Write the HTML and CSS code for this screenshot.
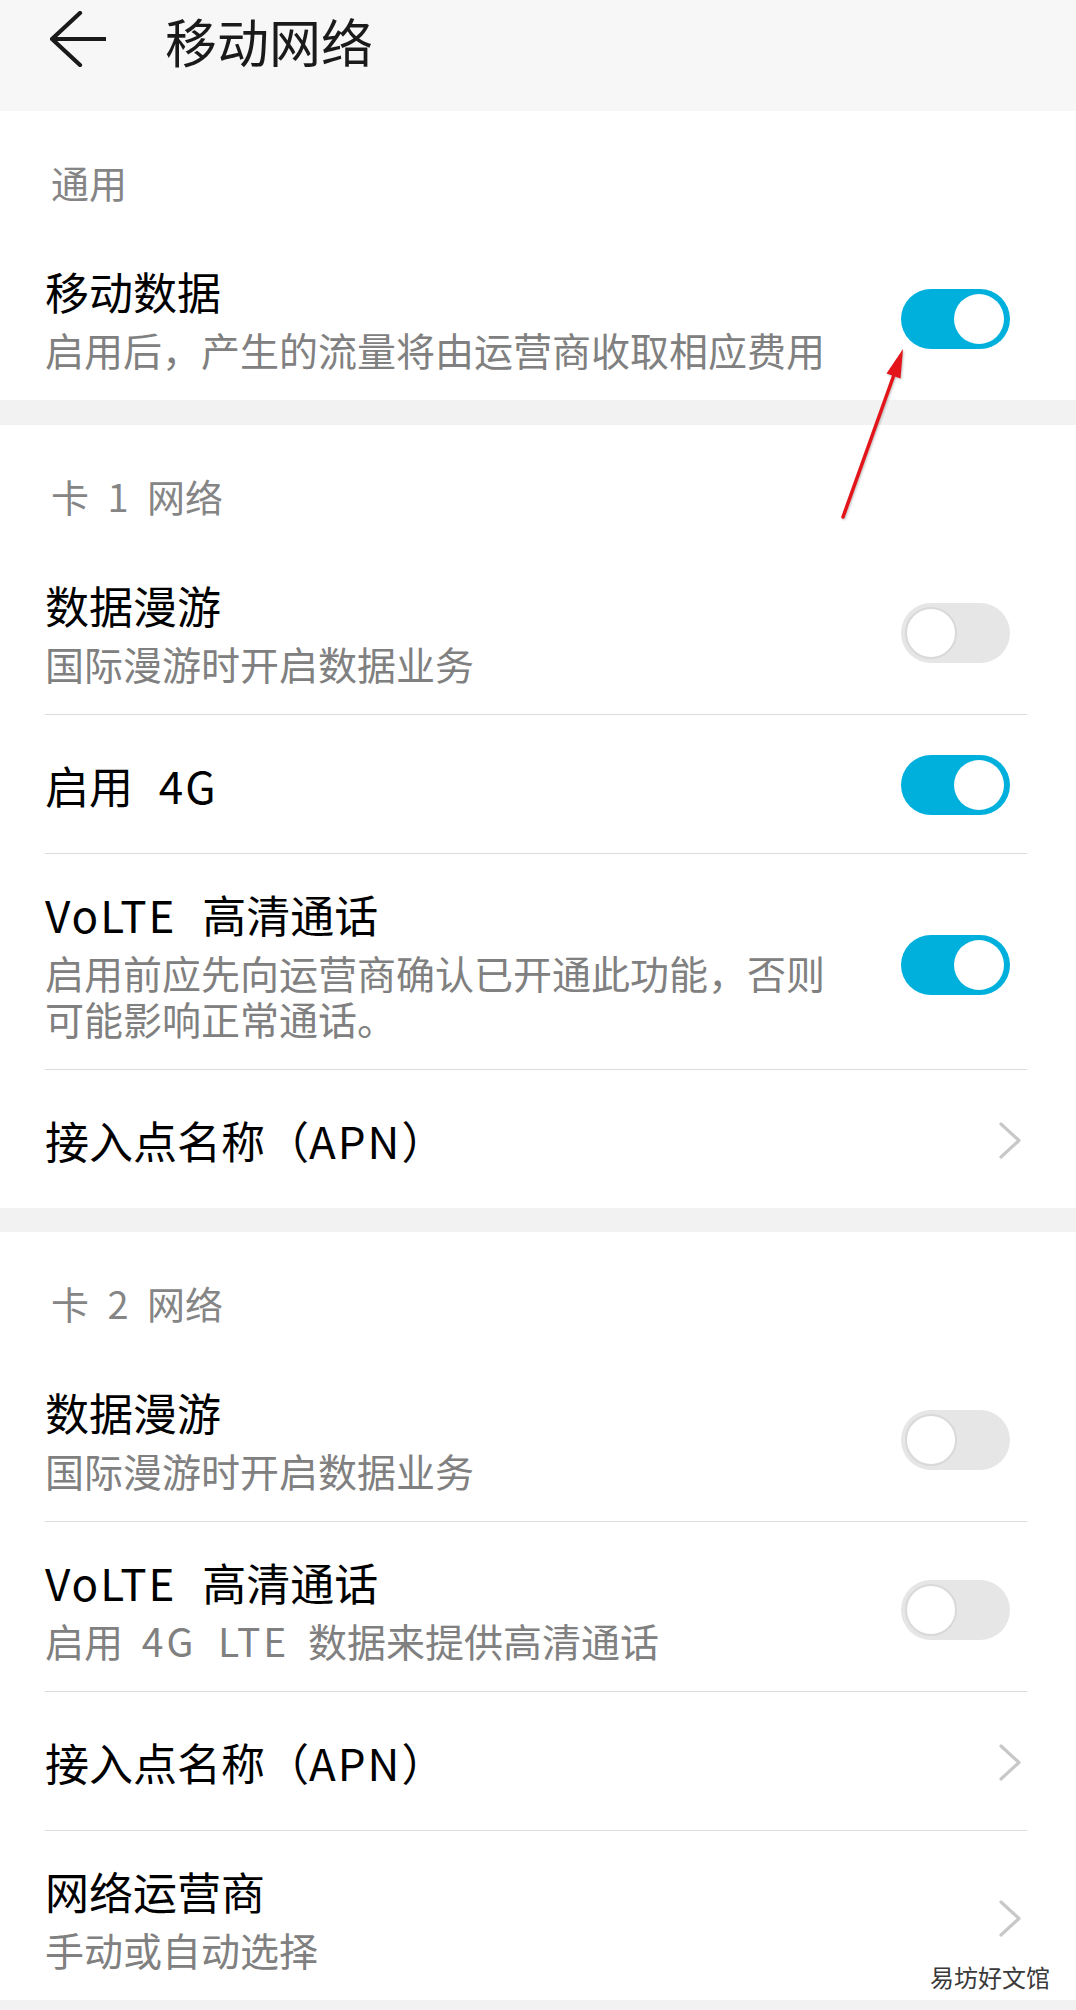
FILE: index.html
```html
<!DOCTYPE html>
<html lang="zh-CN">
<head>
  <meta charset="UTF-8" />
  <meta name="viewport" content="width=device-width, initial-scale=1.0"/>
  <title>移动网络</title>
  <link rel="stylesheet" href="styles.css">
</head>
<body>
  <header class="topbar">
    <svg class="back" width="56" height="56" viewBox="0 0 56 56">
      <path d="M2 28H55M30 2L2 28L30 54" fill="none" stroke="#1a1a1a" stroke-width="4.2" stroke-linecap="round" stroke-linejoin="round"/>
    </svg>
    <h1>移动网络</h1>
  </header>

  <section class="group">
    <div class="group-label">通用</div>
    <div class="item multi">
      <div class="text">
        <div class="title">移动数据</div>
        <div class="sub">启用后，产生的流量将由运营商收取相应费用</div>
      </div>
      <div class="switch on"><span class="knob"></span></div>
    </div>
  </section>

  <section class="group">
    <div class="group-label">卡 <span class="num">1</span> 网络</div>
    <div class="item multi">
      <div class="text">
        <div class="title">数据漫游</div>
        <div class="sub">国际漫游时开启数据业务</div>
      </div>
      <div class="switch"><span class="knob"></span></div>
    </div>
    <div class="item single">
      <div class="text">
        <div class="title">启用 <span class="en after">4G</span></div>
      </div>
      <div class="switch on"><span class="knob"></span></div>
    </div>
    <div class="item multi">
      <div class="text">
        <div class="title"><span class="en before">VoLTE</span> 高清通话</div>
        <div class="sub">启用前应先向运营商确认已开通此功能，否则<br>可能影响正常通话。</div>
      </div>
      <div class="switch on"><span class="knob"></span></div>
    </div>
    <div class="item single">
      <div class="text">
        <div class="title">接入点名称（<span class="en">APN</span>）</div>
      </div>
      <svg class="chevron" width="22" height="37" viewBox="0 0 22 37">
        <path d="M2 2L20 18.5L2 35" fill="none" stroke="#c8c8c8" stroke-width="3.2" stroke-linecap="round" stroke-linejoin="round"/>
      </svg>
    </div>
  </section>

  <section class="group">
    <div class="group-label">卡 <span class="num">2</span> 网络</div>
    <div class="item multi">
      <div class="text">
        <div class="title">数据漫游</div>
        <div class="sub">国际漫游时开启数据业务</div>
      </div>
      <div class="switch"><span class="knob"></span></div>
    </div>
    <div class="item multi">
      <div class="text">
        <div class="title"><span class="en before">VoLTE</span> 高清通话</div>
        <div class="sub">启用 <span class="en">4G LTE</span> 数据来提供高清通话</div>
      </div>
      <div class="switch"><span class="knob"></span></div>
    </div>
    <div class="item single">
      <div class="text">
        <div class="title">接入点名称（<span class="en">APN</span>）</div>
      </div>
      <svg class="chevron" width="22" height="37" viewBox="0 0 22 37">
        <path d="M2 2L20 18.5L2 35" fill="none" stroke="#c8c8c8" stroke-width="3.2" stroke-linecap="round" stroke-linejoin="round"/>
      </svg>
    </div>
    <div class="item multi">
      <div class="text">
        <div class="title">网络运营商</div>
        <div class="sub">手动或自动选择</div>
      </div>
      <svg class="chevron" width="22" height="37" viewBox="0 0 22 37">
        <path d="M2 2L20 18.5L2 35" fill="none" stroke="#c8c8c8" stroke-width="3.2" stroke-linecap="round" stroke-linejoin="round"/>
      </svg>
    </div>
  </section>

  <!-- annotation arrow drawn over the screenshot -->
  <svg class="pointer" width="1076" height="600" viewBox="0 0 1076 600">
    <line x1="843" y1="517" x2="895" y2="372" stroke="#e3151a" stroke-width="3.5" stroke-linecap="round"/>
    <polygon points="903,349 900.5,378.5 886.5,373.5" fill="#e3151a"/>
  </svg>

  <div class="watermark">易坊好文馆</div>
</body>
</html>
```

FILE: styles.css
```css
* {
  box-sizing: border-box;
  margin: 0;
  padding: 0;
}

body {
  font-family: "Noto Sans CJK SC", "Noto Sans", sans-serif;
  background: #f2f2f2;
  color: #000;
  width: 1076px;
  min-height: 2010px;
  position: relative;
  overflow: hidden;
}

.topbar {
  height: 111px;
  background: #f7f7f7;
  display: flex;
  align-items: flex-start;
  padding: 11px 0 0 50px;
}

.topbar h1 {
  font-size: 52px;
  font-weight: 400;
  line-height: 60px;
  margin: 0 0 0 59px;
  color: #1a1a1a;
}

.group {
  background: #fff;
  padding: 0 49px 0 45px;
}

.group + .group {
  margin-top: 25px;
}

.group:last-of-type {
  margin-top: 24px;
}

.group-label {
  height: 120px;
  padding: 49px 0 0 6px;
  font-size: 38px;
  line-height: 44px;
  color: #858585;
}

.group-label .num {
  margin: 0 10px;
}

.item {
  display: flex;
  align-items: center;
  justify-content: space-between;
}

.item + .item {
  border-top: 1px solid #dcdcdc;
}

.item.multi {
  padding: 34px 0 28px;
}

.item.single {
  padding: 44px 0 42px;
}

.title {
  font-size: 44px;
  line-height: 52px;
}

.title .en {
  letter-spacing: 2px;
}

.title .en.after {
  margin-left: 16px;
}

.title .en.before {
  margin-right: 16px;
}

.sub {
  margin-top: 9px;
  font-size: 39px;
  line-height: 46px;
  color: #808080;
  word-spacing: 10px;
}

.sub .en {
  letter-spacing: 3px;
}

.switch {
  width: 109px;
  height: 60px;
  border-radius: 30px;
  background: #e6e6e6;
  display: flex;
  align-items: center;
  padding: 0 4px;
  margin: -4px 17px -4px 0;
  flex-shrink: 0;
}

.switch .knob {
  width: 52px;
  height: 52px;
  border-radius: 50%;
  background: #fff;
  border: 2px solid #d9d9d9;
}

.switch.on {
  background: #00b0dc;
  justify-content: flex-end;
  padding: 0 6px;
}

.switch.on .knob {
  width: 50px;
  height: 50px;
  border: none;
}

.chevron {
  margin-right: 6px;
  flex-shrink: 0;
}

.pointer {
  position: absolute;
  left: 0;
  top: 0;
  pointer-events: none;
  filter: drop-shadow(1px 1px 1px rgba(0, 0, 0, 0.25));
}

.watermark {
  position: absolute;
  left: 930px;
  top: 1961px;
  font-size: 24px;
  line-height: 32px;
  color: #3a3a3a;
  text-shadow: 0 0 2px #fff, 0 0 2px #fff;
}
```
